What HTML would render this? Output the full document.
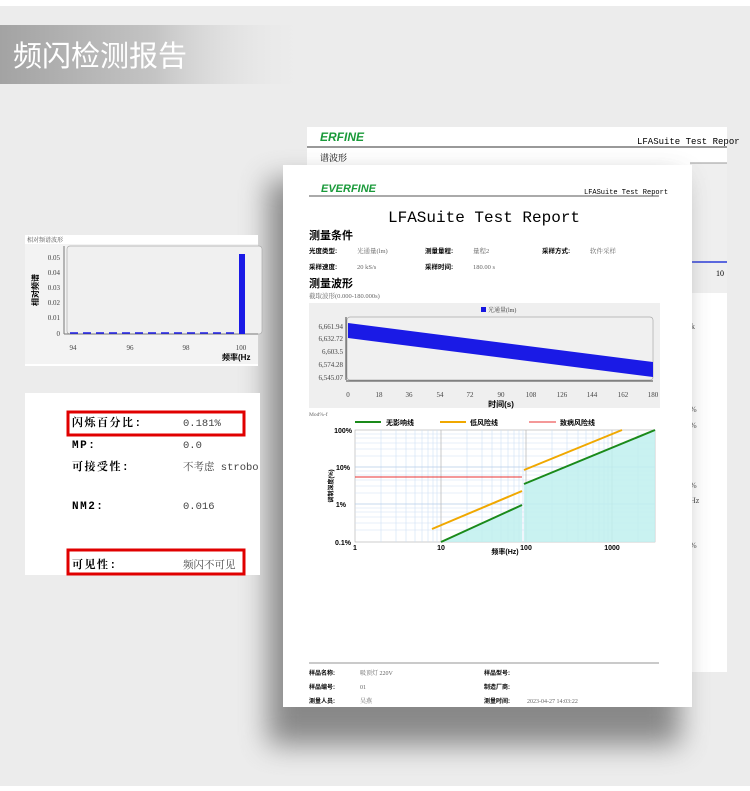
<!DOCTYPE html>
<html><head><meta charset="utf-8"><style>
html,body{margin:0;padding:0;}
body{width:750px;height:791px;overflow:hidden;background:#ececec;font-family:"Liberation Serif","Noto Serif CJK SC",serif;}
svg{display:block}
.b{font-family:"Liberation Sans","Noto Sans CJK SC",sans-serif;font-weight:bold}
.s{font-family:"Liberation Serif","Noto Serif CJK SC",serif}
.m{font-family:"Liberation Mono","Noto Serif CJK SC",monospace}
.mb{font-family:"Liberation Mono","Noto Serif CJK SC",monospace;font-weight:bold}
</style></head><body>
<svg width="750" height="791" viewBox="0 0 750 791" xmlns="http://www.w3.org/2000/svg">
<defs>
<linearGradient id="hg" x1="0" x2="1" y1="0" y2="0">
<stop offset="0" stop-color="#a3a3a3"/><stop offset="0.5" stop-color="#c4c4c4"/><stop offset="1" stop-color="#ececec" stop-opacity="0"/></linearGradient>
<filter id="sh" x="-20%" y="-20%" width="140%" height="140%"><feGaussianBlur stdDeviation="14"/></filter>
<clipPath id="vc"><rect x="25" y="393" width="235" height="182"/></clipPath>
</defs>
<rect width="750" height="791" fill="#ececec"/>
<rect width="750" height="6" fill="#fff"/>
<rect x="0" y="786" width="750" height="5" fill="#fff"/>
<rect x="0" y="25" width="310" height="59" fill="url(#hg)"/>
<text x="13" y="66" fill="#fff" font-size="29" font-family="Liberation Sans,Noto Sans CJK SC,sans-serif">频闪检测报告</text>

<!-- back page -->
<rect x="307" y="127" width="420" height="545" fill="#fff"/>
<rect x="690" y="163" width="37" height="130" fill="#efefef"/>
<line x1="690" y1="262" x2="727" y2="262" stroke="#2a3bd8" stroke-width="1.5"/>
<text x="716" y="276" font-size="8" class="s">10</text>
<text x="320" y="141" font-size="12" font-style="italic" class="b" fill="#1a9a3a">ERFINE</text>
<text x="637" y="144" font-size="9" class="m">LFASuite Test Repor</text>
<line x1="307" y1="147" x2="727" y2="147" stroke="#333" stroke-width="1"/>
<text x="320" y="161" font-size="9" class="s">谱波形</text>
<line x1="690" y1="163" x2="727" y2="163" stroke="#999"/>
<g font-size="8" class="s" fill="#444"><text x="691" y="329">k</text><text x="690" y="412">%</text><text x="690" y="428">%</text><text x="690" y="488">%</text><text x="690" y="503">Hz</text><text x="690" y="548">%</text></g>

<!-- front page shadow -->
<rect x="268" y="180" width="412" height="565" fill="#777" filter="url(#sh)" opacity="0.85"/>
<rect x="283" y="165" width="409" height="542" fill="#fff"/>
<text x="321" y="192" font-size="11" font-style="italic" class="b" fill="#1a9a3a">EVERFINE</text>
<text x="584" y="194" font-size="7" class="m">LFASuite Test Report</text>
<line x1="309" y1="196" x2="659" y2="196" stroke="#555" stroke-width="1"/>
<text x="484" y="222" font-size="16" text-anchor="middle" class="m">LFASuite Test Report</text>
<g class="b" font-size="11"><text x="309" y="239">测量条件</text><text x="309" y="287">测量波形</text></g>
<g font-size="6.5" class="b"><text x="309" y="253">光度类型:</text><text x="425" y="253">测量量程:</text><text x="542" y="253">采样方式:</text>
<text x="309" y="269">采样速度:</text><text x="425" y="269">采样时间:</text></g>
<g font-size="6.5" class="s" fill="#666"><text x="357" y="253">光通量(lm)</text><text x="473" y="253">量程2</text><text x="590" y="253">软件采样</text>
<text x="357" y="269">20 kS/s</text><text x="473" y="269">180.00 s</text><text x="309" y="298">截取波形(0.000-180.000s)</text></g>
<!-- waveform chart -->
<rect x="309" y="303" width="351" height="105" fill="#efefef"/>
<rect x="481" y="307" width="5" height="5" fill="#1515e0"/>
<text x="488" y="312" font-size="6" class="s" fill="#444">光通量(lm)</text>
<rect x="347" y="317" width="306" height="63" rx="3" fill="#f0f0f0" stroke="#aaa" stroke-width="0.7"/>
<polygon points="348,323 653,362 653,377 348,338" fill="#1a1ae6"/>
<line x1="346" y1="317" x2="346" y2="380" stroke="#444"/>
<line x1="346" y1="381" x2="653" y2="381" stroke="#444"/>
<g font-size="7" class="s" fill="#444" text-anchor="end">
<text x="343" y="329">6,661.94</text><text x="343" y="341">6,632.72</text><text x="343" y="354">6,603.5</text><text x="343" y="367">6,574.28</text><text x="343" y="380">6,545.07</text></g>
<g font-size="7" class="s" fill="#444" text-anchor="middle">
<text x="348" y="397">0</text><text x="379" y="397">18</text><text x="409" y="397">36</text><text x="440" y="397">54</text><text x="470" y="397">72</text><text x="501" y="397">90</text><text x="531" y="397">108</text><text x="562" y="397">126</text><text x="592" y="397">144</text><text x="623" y="397">162</text><text x="653" y="397">180</text></g>
<text x="501" y="407" font-size="8" class="b" text-anchor="middle">时间(s)</text>

<!-- mod chart -->
<text x="309" y="416" font-size="5.5" class="s" fill="#666">Mod%-f</text>
<g stroke-width="2"><line x1="355" y1="422" x2="381" y2="422" stroke="#1a8a1a"/><line x1="440" y1="422" x2="466" y2="422" stroke="#f0a800"/><line x1="529" y1="422" x2="556" y2="422" stroke="#e83030" stroke-width="1"/></g>
<g font-size="7" class="b"><text x="386" y="425">无影响线</text><text x="470" y="425">低风险线</text><text x="560" y="425">致病风险线</text></g>
<rect x="355" y="430" width="300" height="112" fill="#fff" stroke="#999" stroke-width="0.5"/>
<g stroke="#cfe0f5" stroke-width="0.6">
<line x1="381" y1="430" x2="381" y2="542"/><line x1="396" y1="430" x2="396" y2="542"/><line x1="406" y1="430" x2="406" y2="542"/><line x1="415" y1="430" x2="415" y2="542"/><line x1="422" y1="430" x2="422" y2="542"/><line x1="428" y1="430" x2="428" y2="542"/><line x1="433" y1="430" x2="433" y2="542"/><line x1="437" y1="430" x2="437" y2="542"/>
<line x1="467" y1="430" x2="467" y2="542"/><line x1="482" y1="430" x2="482" y2="542"/><line x1="492" y1="430" x2="492" y2="542"/><line x1="501" y1="430" x2="501" y2="542"/><line x1="508" y1="430" x2="508" y2="542"/><line x1="514" y1="430" x2="514" y2="542"/><line x1="519" y1="430" x2="519" y2="542"/><line x1="523" y1="430" x2="523" y2="542"/>
<line x1="552" y1="430" x2="552" y2="542"/><line x1="567" y1="430" x2="567" y2="542"/><line x1="578" y1="430" x2="578" y2="542"/><line x1="586" y1="430" x2="586" y2="542"/><line x1="593" y1="430" x2="593" y2="542"/><line x1="599" y1="430" x2="599" y2="542"/><line x1="604" y1="430" x2="604" y2="542"/><line x1="608" y1="430" x2="608" y2="542"/><line x1="638" y1="430" x2="638" y2="542"/>
<line x1="355" y1="434" x2="655" y2="434"/><line x1="355" y1="438" x2="655" y2="438"/><line x1="355" y1="443" x2="655" y2="443"/><line x1="355" y1="449" x2="655" y2="449"/><line x1="355" y1="456" x2="655" y2="456"/>
<line x1="355" y1="471" x2="655" y2="471"/><line x1="355" y1="475" x2="655" y2="475"/><line x1="355" y1="480" x2="655" y2="480"/><line x1="355" y1="486" x2="655" y2="486"/><line x1="355" y1="493" x2="655" y2="493"/>
<line x1="355" y1="508" x2="655" y2="508"/><line x1="355" y1="512" x2="655" y2="512"/><line x1="355" y1="517" x2="655" y2="517"/><line x1="355" y1="523" x2="655" y2="523"/><line x1="355" y1="530" x2="655" y2="530"/></g>
<g stroke="#b5cbe8" stroke-width="0.8"><line x1="355" y1="467" x2="655" y2="467"/><line x1="355" y1="504" x2="655" y2="504"/></g>
<g stroke="#bbb" stroke-width="0.8"><line x1="441" y1="430" x2="441" y2="542"/><line x1="526" y1="430" x2="526" y2="542"/><line x1="612" y1="430" x2="612" y2="542"/></g>
<polygon points="441,542 522,505 522,542" fill="#bff0ee" opacity="0.85"/>
<polygon points="524,484 655,430 655,542 524,542" fill="#bff0ee" opacity="0.85"/>
<line x1="355" y1="477" x2="522" y2="477" stroke="#e83030" stroke-width="1"/>
<g stroke-width="2" fill="none"><polyline points="432,529 522,491" stroke="#f0a800"/><polyline points="524,470 622,430" stroke="#f0a800"/>
<polyline points="441,542 522,505" stroke="#1a8a1a"/><polyline points="524,484 655,430" stroke="#1a8a1a"/></g>
<g font-size="7" class="b" text-anchor="end"><text x="352" y="433">100%</text><text x="350" y="470">10%</text><text x="346" y="507">1%</text><text x="351" y="545">0.1%</text></g>
<g font-size="7" class="b" text-anchor="middle"><text x="355" y="550">1</text><text x="441" y="550">10</text><text x="526" y="550">100</text><text x="612" y="550">1000</text><text x="505" y="554">频率(Hz)</text></g>
<text transform="translate(333,486) rotate(-90)" font-size="6" class="b" text-anchor="middle">调制深度(%)</text>

<!-- footer -->
<line x1="309" y1="663" x2="659" y2="663" stroke="#aaa" stroke-width="1.2"/>
<g font-size="6" class="b"><text x="309" y="675">样品名称:</text><text x="309" y="689">样品编号:</text><text x="309" y="703">测量人员:</text>
<text x="484" y="675">样品型号:</text><text x="484" y="689">制造厂商:</text><text x="484" y="703">测量时间:</text></g>
<g font-size="6" class="s" fill="#666"><text x="360" y="675">吸顶灯 220V</text><text x="360" y="689">01</text><text x="360" y="703">吴燕</text><text x="527" y="703">2023-04-27 14:03:22</text></g>

<!-- left spectrum chart -->
<rect x="25" y="235" width="233" height="131" fill="#fff"/>
<rect x="25" y="244" width="233" height="120" fill="#f3f3f3"/>
<text x="27" y="242" font-size="6" class="s" fill="#555">相对频谱波形</text>
<rect x="67" y="246" width="195" height="88" rx="3" fill="#f0f0f0" stroke="#aaa" stroke-width="0.7"/>
<line x1="64" y1="246" x2="64" y2="334" stroke="#777"/>
<line x1="64" y1="334" x2="258" y2="334" stroke="#777"/>
<rect x="239" y="254" width="6" height="80" fill="#1a1ae6"/>
<g stroke="#1a1ae6" stroke-width="1.5" stroke-dasharray="8,5"><line x1="70" y1="333" x2="237" y2="333"/></g>
<g font-size="7" class="s" fill="#444" text-anchor="end"><text x="60" y="260">0.05</text><text x="60" y="275">0.04</text><text x="60" y="290">0.03</text><text x="60" y="305">0.02</text><text x="60" y="320">0.01</text><text x="60" y="336">0</text></g>
<g font-size="7" class="s" fill="#444" text-anchor="middle"><text x="73" y="350">94</text><text x="130" y="350">96</text><text x="186" y="350">98</text><text x="241" y="350">100</text></g>
<text x="222" y="360" font-size="8" class="b">频率(Hz</text>
<text transform="translate(38,290) rotate(-90)" font-size="8" class="b" text-anchor="middle">相对频谱</text>

<!-- left values -->
<rect x="25" y="393" width="235" height="182" fill="#fff"/>
<g clip-path="url(#vc)">
<g font-size="11" class="mb" letter-spacing="1.5"><text x="72" y="426">闪烁百分比:</text><text x="72" y="448">MP:</text><text x="72" y="470">可接受性:</text><text x="72" y="509">NM2:</text><text x="72" y="568">可见性:</text></g>
<g font-size="10.5" class="m" fill="#444"><text x="183" y="426">0.181%</text><text x="183" y="448">0.0</text><text x="183" y="470">不考虑 strobo</text><text x="183" y="509">0.016</text><text x="183" y="568">频闪不可见</text></g>
</g>
<rect x="68" y="412" width="176" height="23" fill="none" stroke="#e00000" stroke-width="3"/>
<rect x="68" y="550" width="176" height="24" fill="none" stroke="#e00000" stroke-width="3"/>
</svg>
</body></html>
